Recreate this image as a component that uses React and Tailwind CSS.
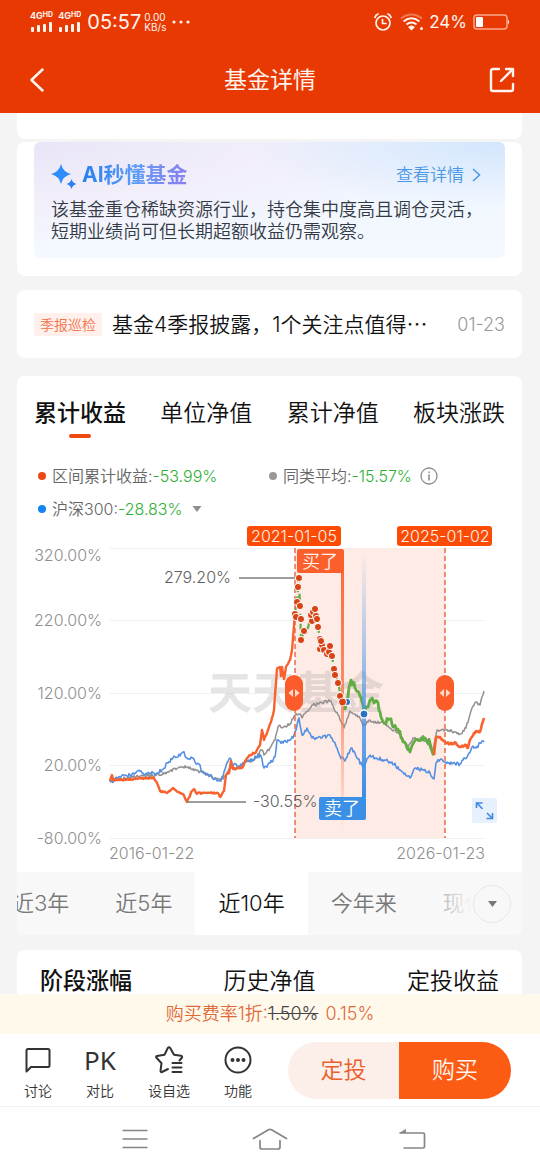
import React from 'react';

const ORANGE = '#f9622f';
const GREEN = '#62ad45';

const fundLine = [[110,781],[112,775],[113,780],[120,780],[135,779],[154,778],[157,783],[160,791],[167,793],[173,788],[178,792],[183,794],[187,802],[192,791],[194,789],[196,793],[218,793],[220,797],[224,791],[226,775],[229,773],[231,761],[233,769],[237,768],[242,768],[246,760],[250,755],[256,752],[260,745],[262,730],[264,740],[268,730],[271,722],[274,710],[275,695],[277,669],[280,667],[281,676],[282,667],[284,679],[286,667],[288,664],[290,660],[292,650],[294,625],[295,612]];
const rangeLine = [[295,612],[297,602],[299,578],[300,606],[301,640],[304,631],[308,628],[312,614],[315,609],[317,619],[318,627],[320,640],[322,649],[327,654],[330,646],[332,656],[334,669],[338,683],[341,697],[345,710],[347,700],[350,684],[351,680],[352,685],[354,683],[356,690],[359,693],[362,702],[364,712],[367,707],[371,700],[372,698],[374,703],[377,701],[380,712],[384,723],[390,719],[394,727],[399,732],[404,742],[410,752],[414,742],[418,740],[425,738],[430,743],[434,755]];
const tailLine = [[434,755],[435,745],[436,738],[440,737],[445,742],[450,744],[456,743],[460,747],[466,745],[468,748],[470,740],[474,733],[478,731],[480,732],[482,724],[484,718]];
const averageLine = [[110,782],[115,781],[125,778],[135,777],[145,776],[155,775],[160,775],[170,771],[180,767],[188,767],[196,770],[204,773],[210,776],[216,778],[220,781],[225,776],[230,768],[235,770],[240,766],[246,762],[250,762],[256,757],[262,750],[264,755],[270,748],[275,740],[278,727],[285,726],[290,724],[295,715],[300,714],[302,718],[306,712],[312,705],[318,704],[324,702],[331,701],[334,709],[338,715],[344,728],[350,711],[355,714],[360,718],[363,726],[370,720],[376,723],[382,722],[390,728],[396,732],[402,737],[408,748],[413,738],[420,740],[426,741],[433,752],[435,740],[437,730],[445,730],[455,732],[460,734],[466,728],[472,708],[476,702],[480,705],[482,697],[484,691]];
const indexLine = [[110,782],[120,777],[130,775],[141,771],[145,775],[150,773],[157,773],[162,770],[168,763],[173,758],[178,757],[183,752],[187,758],[192,758],[195,762],[199,764],[202,772],[210,776],[216,779],[221,781],[226,766],[230,758],[232,764],[240,766],[245,762],[250,761],[256,757],[261,756],[264,768],[270,763],[275,757],[277,740],[283,743],[290,740],[294,735],[297,725],[299,718],[302,735],[307,728],[312,738],[322,738],[330,735],[334,742],[340,756],[345,761],[351,748],[356,756],[363,767],[370,755],[376,758],[384,760],[392,762],[400,770],[410,778],[415,768],[422,770],[430,773],[434,779],[436,763],[441,759],[445,762],[452,764],[460,764],[468,755],[472,747],[476,748],[480,743],[484,742]];

const buyDots = [[295,614],[297,602],[296,617],[312,621],[311,615],[313,612],[316,616],[320,639],[320,649],[322,645],[324,650],[327,654],[329,652],[340,696],[298,587],[300,606],[301,619],[304,631],[301,640],[315,609],[317,619],[318,627],[321,641],[330,646],[332,656],[334,669],[335,675],[338,683],[299,578]];

const gridRows = [
  { y: 548, label: '320.00%', labelY: 561 },
  { y: 620, label: '220.00%', labelY: 626 },
  { y: 693, label: '120.00%', labelY: 699 },
  { y: 765, label: '20.00%', labelY: 771 },
  { y: 838, label: '-80.00%', labelY: 844 },
];

// Fills in a day-to-day wobble between the key points of a series
const toPath = (points, amp) => {
  const out = [];
  points.forEach(([x, y], i) => {
    out.push(`${x} ${y}`);
    const next = points[i + 1];
    if (!next) return;
    const steps = Math.floor(next[0] - x);
    for (let s = 1; s < steps; s++) {
      const px = x + s;
      const noise = Math.sin(px * 12.9898 + y) * 43758.5453;
      const jitter = (noise - Math.floor(noise) - 0.5) * 2 * amp;
      out.push(`${px} ${(y + ((next[1] - y) * s) / steps + jitter).toFixed(1)}`);
    }
  });
  return `M${out.join('L')}`;
};

const Signal = () => (
  <div className="flex flex-col gap-[2px]">
    <div className="flex items-start font-bold leading-none">
      <span className="text-[9px] leading-[8px]">4G</span>
      <span className="text-[7px] leading-[6px]">HD</span>
    </div>
    <svg className="ml-[1px] w-[22px] h-[10px]" viewBox="0 0 22 10" fill="currentColor">
      <rect x="0" y="5" width="3" height="5" rx="1" />
      <rect x="6" y="3" width="3" height="7" rx="1" />
      <rect x="12" y="2" width="3" height="8" rx="1" />
      <rect x="18" y="0" width="3" height="10" rx="1" />
    </svg>
  </div>
);

const StatusBar = () => (
  <div className="flex items-center justify-between h-[44px] px-[30px] font-normal">
    <div className="flex items-center">
      <Signal />
      <div className="ml-[5px]"><Signal /></div>
      <span className="ml-[6px] text-[20px] leading-6">05:57</span>
      <div className="flex flex-col ml-[3px] text-[10px] leading-[10px]">
        <span>0.00</span>
        <span>KB/s</span>
      </div>
      <svg className="ml-[6px] w-[18px] h-1" viewBox="0 0 18 4" fill="currentColor">
        <circle cx="2" cy="2" r="1.6" />
        <circle cx="9" cy="2" r="1.6" />
        <circle cx="16" cy="2" r="1.6" />
      </svg>
    </div>
    <div className="flex items-center">
      <svg className="w-[18px] h-[18px]" viewBox="0 0 18 18" fill="none" stroke="currentColor" strokeWidth="1.7" strokeLinecap="round">
        <circle cx="9" cy="10" r="7" />
        <path d="M8.5 6.5V10.5H12M1 4.5Q1.5 2 4 1M17 4.5Q16.5 2 14 1" />
      </svg>
      <svg className="ml-2 w-6 h-[18px]" viewBox="0 0 24 18" fill="none" stroke="currentColor" strokeWidth="1.9">
        <path d="M1 5.5Q11.5 -2.5 22 5.5" opacity="0.35" />
        <path d="M3.5 8.5Q11.5 2 19.5 8.5M6.5 11.5Q11.5 7.5 16.5 11.5" />
        <path d="M8 14Q11.5 11 15 14L11.5 17.5Z" fill="currentColor" stroke="none" />
        <circle cx="21.5" cy="15.5" r="1.5" fill="currentColor" stroke="none" />
      </svg>
      <span className="ml-[5px] text-[17px] leading-5">24%</span>
      <svg className="ml-[6px] w-[37px] h-4" viewBox="0 0 37 16" fill="none">
        <rect x="1" y="1" width="33" height="14" rx="3" stroke="#fba98b" strokeWidth="1.5" />
        <rect x="3" y="3" width="7" height="10" rx="1" fill="#fff" />
        <path d="M35 5.5Q37 8 35 10.5Z" fill="#fff" />
      </svg>
    </div>
  </div>
);

const Header = () => (
  <header className="shrink-0 bg-[#e83902] text-[#fff4ee]">
    <StatusBar />
    <div className="grid grid-cols-[1fr_auto_1fr] items-center h-[69px] px-[25px] pt-[3px]">
      <button type="button" aria-label="返回" className="justify-self-start pl-1">
        <svg className="w-4 h-6" viewBox="0 0 16 24" fill="none" stroke="currentColor" strokeWidth="2.5" strokeLinecap="round" strokeLinejoin="round">
          <path d="M13.5 1.5L2.5 12L13.5 22.5" />
        </svg>
      </button>
      <h1 className="text-[23px] leading-8 font-normal">基金详情</h1>
      <button type="button" aria-label="分享" className="justify-self-end">
        <svg className="w-[26px] h-[26px]" viewBox="0 0 26 26" fill="none" stroke="currentColor" strokeWidth="2.4" strokeLinecap="round" strokeLinejoin="round">
          <path d="M10 2H4Q2 2 2 4V22Q2 24 4 24H22Q24 24 24 22V17" />
          <path d="M12 14L23 3M17 2H24V9" />
        </svg>
      </button>
    </div>
  </header>
);

const AiCard = () => (
  <section className="mt-[3px] px-[17px] pb-[18px] bg-white rounded-lg">
    <div className="h-[116px] pl-[17px] pr-2 pt-[19px] rounded-md bg-[radial-gradient(ellipse_at_top_right,#d3e6fd_0%,transparent_40%),radial-gradient(ellipse_at_top_left,#e9e5f8_0%,#f2effa_35%,transparent_65%),linear-gradient(#eff5fe,#f4f9ff)]">
      <div className="flex items-center justify-between h-7">
        <h2 className="flex items-center text-[21px] leading-7 font-bold">
          <svg className="w-[26px] h-[26px] mr-[5px] mt-1" viewBox="0 0 26 26">
            <path d="M10 0Q12 8 20 10Q12 12 10 20Q8 12 0 10Q8 8 10 0Z" fill="#2f8dfb" />
            <path d="M20.5 15Q21.5 19 25.5 20Q21.5 21 20.5 25Q19.5 21 15.5 20Q19.5 19 20.5 15Z" fill="#2b7df0" />
          </svg>
          <span className="bg-gradient-to-r from-[#257ff0] via-[#5a9cf7] to-[#8b7df0] bg-clip-text text-transparent">AI秒懂基金</span>
        </h2>
        <a href="#ai" className="flex items-center gap-2 mr-4 text-[17px] leading-6 text-[#4b96e6]">
          查看详情
          <svg className="w-[9px] h-[14px]" viewBox="0 0 9 14" fill="none" stroke="currentColor" strokeWidth="1.5">
            <path d="M1 1L7.5 7L1 13" />
          </svg>
        </a>
      </div>
      <p className="mt-[10px] text-[18px] leading-[22px] text-[#333a45]">
        该基金重仓稀缺资源行业，持仓集中度高且调仓灵活，<br />
        短期业绩尚可但长期超额收益仍需观察。
      </p>
    </div>
  </section>
);

const ReportCard = () => (
  <section className="flex items-center h-[68px] mt-[14px] px-[17px] bg-white rounded-lg">
    <span className="shrink-0 px-[6px] text-[14px] leading-[23px] text-[#f4704a] bg-[#fff0eb] rounded-xs">季报巡检</span>
    <a href="#report" className="ml-[10px] flex-1 whitespace-nowrap text-[21px] leading-8 text-[#111]">
      基金4季报披露，1个关注点值得<span className="font-['Noto_Sans_CJK_SC',sans-serif]">…</span>
    </a>
    <time className="shrink-0 text-[18px] text-[#999]">01-23</time>
  </section>
);

const RangeHandle = ({ label, className }) => (
  <button type="button" aria-label={label} className={`absolute top-[44%] w-[18px] h-[36px] rounded-full bg-[#fb5c2a] ${className}`}>
    <svg className="w-[18px] h-[36px]" viewBox="0 0 18 36" fill="#ffd9ca">
      <path d="M8 14V22L3.5 18ZM10 14V22L14.5 18Z" />
    </svg>
  </button>
);

const Chart = () => (
  <div className="relative">
    <svg className="block w-full h-auto" viewBox="17 521 505 351" fill="none">
      <defs>
        <linearGradient id="buy" x1="0" y1="572" x2="0" y2="832" gradientUnits="userSpaceOnUse">
          <stop offset="0" stopColor="#fb6a3c" />
          <stop offset="0.5" stopColor="#fb7a50" stopOpacity="0.8" />
          <stop offset="1" stopColor="#fb8a66" stopOpacity="0" />
        </linearGradient>
        <linearGradient id="sell" x1="0" y1="552" x2="0" y2="797" gradientUnits="userSpaceOnUse">
          <stop offset="0" stopColor="#4a94e6" stopOpacity="0" />
          <stop offset="0.65" stopColor="#4a94e6" stopOpacity="0.75" />
          <stop offset="1" stopColor="#3c8ee6" />
        </linearGradient>
      </defs>

      {gridRows.map((row) => (
        <g key={row.label}>
          <path d={`M110 ${row.y}.5H485`} stroke="#f1f1f1" />
          <text x="102" y={row.labelY} textAnchor="end" fontSize="16" fill="#8f8f8f">{row.label}</text>
        </g>
      ))}
      <text x="109" y="859" fontSize="16" fill="#8f8f8f">2016-01-22</text>
      <text x="485" y="859" textAnchor="end" fontSize="16" fill="#8f8f8f">2026-01-23</text>

      <rect x="295" y="548" width="150" height="290" fill="#feebe6" />
      <text x="208" y="709" fontSize="44" fontWeight="700" fill="#8a8a8a" fillOpacity="0.24">天天基金</text>

      <path d={toPath(averageLine, 1.5)} stroke="#929090" strokeWidth="1.5" strokeLinejoin="round" />
      <path d={toPath(indexLine, 1.8)} stroke="#5590e2" strokeWidth="1.6" strokeLinejoin="round" />
      <path d={toPath(fundLine, 0.8)} stroke={ORANGE} strokeWidth="2.4" strokeLinejoin="round" />
      <path d={toPath(rangeLine.slice(0, 20), 1)} stroke={GREEN} strokeWidth="2.2" strokeDasharray="6 4" />
      <path d={toPath(rangeLine.slice(19), 2.6)} stroke={GREEN} strokeWidth="2.8" strokeLinejoin="round" />
      <path d={toPath(tailLine, 1)} stroke={ORANGE} strokeWidth="2.6" strokeLinejoin="round" />

      <path d="M295 548V838M445 548V838" stroke="#ea6a48" strokeWidth="1.5" strokeDasharray="5 3" />

      <path d="M239 578H299M187 802H246" stroke="#7d7d7d" strokeWidth="1.7" />
      <text x="231" y="583" textAnchor="end" fontSize="16" fill="#5f5f5f">279.20%</text>
      <text x="253" y="807" fontSize="16" fill="#5f5f5f">-30.55%</text>

      <rect x="341" y="572" width="3" height="260" fill="url(#buy)" />
      <rect x="362" y="552" width="4" height="246" fill="url(#sell)" />
      <rect x="297" y="549" width="47" height="24" rx="2" fill="#fb5f2c" />
      <text x="320" y="568" textAnchor="middle" fontSize="18" fill="#fff1eb">买了</text>
      <rect x="319" y="797" width="47" height="23" rx="2" fill="#3a8fe6" />
      <text x="342" y="815" textAnchor="middle" fontSize="18" fill="#fff">卖了</text>

      {buyDots.map(([x, y], i) => (
        <circle key={i} cx={x} cy={y} r="3.6" fill="#d84315" stroke="#fff" strokeWidth="1" />
      ))}
      <circle cx="347" cy="702" r="3.6" fill="#2a6fc0" stroke="#fff" />
      <circle cx="342.5" cy="702" r="4" fill="#e0400f" stroke="#fff" />
      <circle cx="364" cy="714" r="4" fill="#2a6fc0" stroke="#fff" strokeWidth="1.3" />

      <rect x="247" y="526" width="94" height="20" rx="3" fill="#fb4b05" />
      <text x="294" y="542" textAnchor="middle" fontSize="16" fill="#fff1eb">2021-01-05</text>
      <rect x="397" y="526" width="95" height="20" rx="3" fill="#fb4b05" />
      <text x="445" y="542" textAnchor="middle" fontSize="16" fill="#fff1eb">2025-01-02</text>
    </svg>
    <RangeHandle label="区间起点" className="left-[53%]" />
    <RangeHandle label="区间终点" className="left-[83%]" />
    <button type="button" aria-label="全屏" className="absolute right-[5%] bottom-[14%] w-[25px] h-[25px] bg-[#e7f1fd] rounded-xs text-[#3f88dc]">
      <svg className="w-[25px] h-[25px]" viewBox="0 0 25 25" fill="none" stroke="currentColor" strokeWidth="1.6">
        <path d="M4.5 10V5H10.5M5 5L10.5 11M20.5 15V20.5H14.5M20.5 20.5L15 15" />
      </svg>
    </button>
  </div>
);

const LegendItem = ({ dot, name, value, children }) => (
  <div className="flex items-center">
    <span className={`w-2 h-2 mr-[6px] rounded-full ${dot}`} />
    <span className="text-[#666]">{name}:</span>
    <span className="text-[#2fae32]">{value}</span>
    {children}
  </div>
);

const PerformanceCard = () => {
  const tabs = ['累计收益', '单位净值', '累计净值', '板块涨跌'];
  const periods = ['近3年', '近5年', '近10年', '今年来', '现任以来'];

  return (
    <section className="mt-[18px] bg-white rounded-lg overflow-hidden">
      <div className="flex justify-between px-[17px] pt-5">
        {tabs.map((tab, i) => (
          <button key={tab} type="button" className={`flex flex-col items-center text-[23px] leading-[34px] text-[#111] ${i === 0 ? 'font-medium' : ''}`}>
            {tab}
            {i === 0 && <span className="w-[22px] h-1 mt-1 rounded-full bg-[#ec4a12]" />}
          </button>
        ))}
      </div>
      <div className="grid grid-cols-[231px_1fr] gap-y-[9px] mt-[26px] pl-[21px] text-[16px] leading-6">
        <LegendItem dot="bg-[#ec4a12]" name="区间累计收益" value="-53.99%" />
        <LegendItem dot="bg-[#999]" name="同类平均" value="-15.57%">
          <button type="button" aria-label="说明" className="ml-2">
            <svg className="block w-[18px] h-[18px]" viewBox="0 0 18 18" fill="none" stroke="#8e8e8e" strokeWidth="1.3">
              <circle cx="9" cy="9" r="8" />
              <path d="M9 7.5V13.5M9 4.5V6" strokeWidth="1.6" />
            </svg>
          </button>
        </LegendItem>
        <LegendItem dot="bg-[#1485ee]" name="沪深300" value="-28.83%">
          <button type="button" aria-label="切换指数" className="ml-[9px]">
            <svg className="block w-[10px] h-[6px]" viewBox="0 0 10 6" fill="#8e8e8e"><path d="M0.500 0H9.500L5 6Z" /></svg>
          </button>
        </LegendItem>
      </div>
      <Chart />
      <div className="relative h-[63px] bg-[#f8f8f8] overflow-hidden">
        <div className="flex h-full -ml-7">
          {periods.map((p) => (
            <button key={p} type="button" className={`shrink-0 px-[23px] text-[22px] ${p === '近10年' ? 'bg-white text-[#111]' : 'text-[#777]'}`}>
              {p}
            </button>
          ))}
        </div>
        <div className="absolute inset-y-0 right-0 flex items-center w-[100px] pr-[11px] justify-end bg-gradient-to-r from-[#f8f8f8]/20 to-[#f8f8f8] to-50%">
          <button type="button" aria-label="更多区间" className="flex items-center justify-center w-[38px] h-[38px] rounded-full border border-[#e6e6e6] bg-[#f8f8f8]">
            <svg className="w-[9px] h-[6px]" viewBox="0 0 9 6" fill="#777"><path d="M0 0H9L4.5 6Z" /></svg>
          </button>
        </div>
      </div>
    </section>
  );
};

const StageCard = () => (
  <section className="flex justify-between mt-[15px] px-[23px] pt-[14px] pb-6 bg-white rounded-lg text-[23px] leading-[34px] text-[#111]">
    <button type="button" className="font-medium">阶段涨幅</button>
    <button type="button">历史净值</button>
    <button type="button">定投收益</button>
  </section>
);

const ToolItem = ({ label, children }) => (
  <button type="button" className="flex flex-col items-center gap-[6px] text-[14px] leading-5 text-[#333]">
    <span className="flex items-center justify-center h-[30px]">{children}</span>
    {label}
  </button>
);

const Footer = () => (
  <footer className="shrink-0">
    <p className="h-10 text-center text-[18px] leading-10 bg-[#fff9ec] text-[#df6a38]">
      购买费率1折:<del className="text-[#444]">1.50%</del> <span className="ml-[2px]">0.15%</span>
    </p>
    <div className="flex items-center justify-between h-[73px] pl-6 pr-[29px] bg-white border-b border-[#f3f3f3]">
      <div className="flex gap-[34px] pt-[6px]">
        <ToolItem label="讨论">
          <svg className="w-[26px] h-[26px]" viewBox="0 0 26 26" fill="none" stroke="#333" strokeWidth="2" strokeLinejoin="round">
            <path d="M3 2H23Q24.5 2 24.5 3.5V18.5Q24.5 20 23 20H6L1.5 24.5V3.5Q1.5 2 3 2Z" />
          </svg>
        </ToolItem>
        <ToolItem label="对比"><span className="-mx-1 text-[26px] leading-[30px] font-normal font-['Noto_Sans','Noto_Sans_CJK_SC',sans-serif]">PK</span></ToolItem>
        <ToolItem label="设自选">
          <svg className="w-[30px] h-[30px]" viewBox="0 0 30 30" fill="none" stroke="#333" strokeWidth="2" strokeLinejoin="round" strokeLinecap="round">
            <path d="M25.5 15.5L28 12.5Q28.5 11 27 10.7L20 9.8L16.2 3Q15 1.3 13.8 3L10.5 9.8L3 11Q1.5 11.5 2.5 12.8L7.5 18.2L6.5 26Q6.500 27.500 8 27L14 24" />
            <path d="M18.5 18H27.5M18.5 22.5H27.5M18.5 27H27.5" />
          </svg>
        </ToolItem>
        <ToolItem label="功能">
          <svg className="w-[28px] h-[28px]" viewBox="0 0 28 28" fill="none" stroke="#333" strokeWidth="2">
            <circle cx="14" cy="14" r="12.5" />
            <g fill="#333" stroke="none">
              <circle cx="8.5" cy="14" r="2" />
              <circle cx="14" cy="14" r="2" />
              <circle cx="19.5" cy="14" r="2" />
            </g>
          </svg>
        </ToolItem>
      </div>
      <div className="flex h-[57px] text-[23px] rounded-full overflow-hidden">
        <button type="button" className="w-[111px] bg-[#fceee8] text-[#e8602c]">定投</button>
        <button type="button" className="w-[112px] bg-[#fc5b14] text-[#fff4ee]">购买</button>
      </div>
    </div>
    <nav className="grid grid-cols-[1fr_auto_1fr] items-center h-[63px] px-[114px] bg-white text-[#858585]">
      <button type="button" aria-label="最近任务" className="justify-self-start pl-2">
        <svg className="w-[26px] h-5" viewBox="0 0 26 20" fill="none" stroke="currentColor" strokeWidth="1.7"><path d="M0.5 1.5H25.5M0.5 10H25.5M0.5 18.5H25.5" /></svg>
      </button>
      <button type="button" aria-label="主页">
        <svg className="w-[36px] h-[22px]" viewBox="0 0 36 22" fill="none" stroke="currentColor" strokeWidth="1.7" strokeLinecap="round" strokeLinejoin="round">
          <path d="M1.5 10.5L16.5 1.7Q18 1 19.5 1.7L34.5 10.5M8 12.5V19Q8 21 10 21H26Q28 21 28 19V12.5" />
        </svg>
      </button>
      <button type="button" aria-label="返回上一页" className="justify-self-end">
        <svg className="w-[28px] h-[22px]" viewBox="0 0 28 22" fill="none" stroke="currentColor" strokeWidth="1.7" strokeLinejoin="round">
          <path d="M1.5 5H25Q26.5 5 26.5 6.5V18.5Q26.5 20 25 20H5.5" />
          <path d="M1 5L8 1V5Z" fill="currentColor" stroke="none" />
        </svg>
      </button>
    </nav>
  </footer>
);

export default function App() {
  return (
    <div className="flex flex-col h-screen bg-[#f4f4f4] font-['Inter','Noto_Sans_CJK_SC',sans-serif] font-[350]">
      <Header />
      <main className="flex-1 min-h-0 pl-[17px] pr-[18px] overflow-y-auto [scrollbar-width:none]">
        <div className="h-[26px] bg-white rounded-b-lg" />
        <AiCard />
        <ReportCard />
        <PerformanceCard />
        <StageCard />
      </main>
      <Footer />
    </div>
  );
}
